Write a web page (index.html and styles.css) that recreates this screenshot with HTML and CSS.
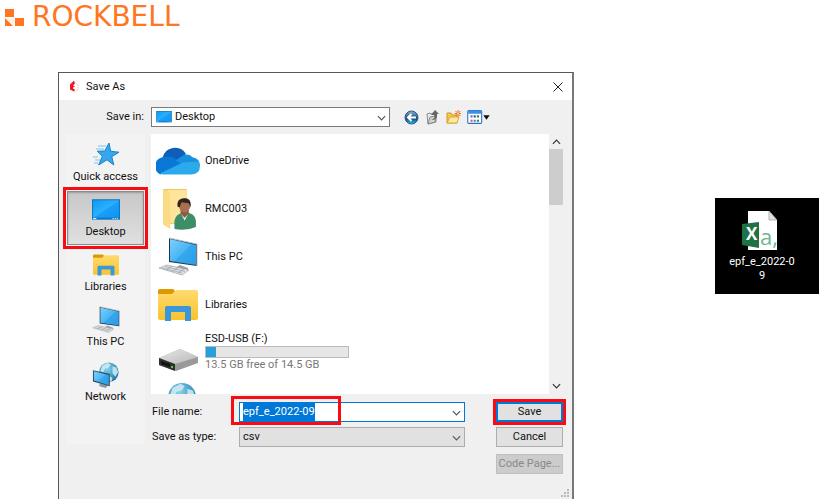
FILE: index.html
```html
<!DOCTYPE html>
<html lang="en">
<head>
<meta charset="utf-8">
<title>Save As</title>
<link rel="stylesheet" href="styles.css">
</head>
<body>
<svg class="defs" aria-hidden="true">
  <defs>
    <linearGradient id="blue" x1="0" y1="0" x2="1" y2="1"><stop offset="0" stop-color="#129af0"/><stop offset=".5" stop-color="#2cb0ff"/><stop offset=".52" stop-color="#18a0fa"/><stop offset="1" stop-color="#1493ee"/></linearGradient>
    <linearGradient id="screen" x1="0" y1="0" x2="1" y2="1"><stop offset="0" stop-color="#7dd0fb"/><stop offset=".5" stop-color="#49b6f5"/><stop offset=".52" stop-color="#35a8ee"/><stop offset="1" stop-color="#2d9de6"/></linearGradient>
    <linearGradient id="gold" x1="0" y1="0" x2="0" y2="1"><stop offset="0" stop-color="#ffdb6e"/><stop offset="1" stop-color="#f8c32c"/></linearGradient>
    <linearGradient id="metal" x1="0" y1="0" x2="1" y2="1"><stop offset="0" stop-color="#e6e6e6"/><stop offset="1" stop-color="#b9b9b9"/></linearGradient>
    <radialGradient id="sea" cx=".4" cy=".3" r=".8"><stop offset="0" stop-color="#8fd3ec"/><stop offset=".6" stop-color="#3b98c4"/><stop offset="1" stop-color="#19608f"/></radialGradient>
    <linearGradient id="orb" x1="0" y1="0" x2="0" y2="1"><stop offset="0" stop-color="#9aaec2"/><stop offset=".4" stop-color="#2a6aa5"/><stop offset=".6" stop-color="#0f4a86"/><stop offset="1" stop-color="#35c0ea"/></linearGradient>
  </defs>
  <symbol id="desktop" viewBox="0 0 26 20"><rect width="26" height="19" fill="#0a78c8"/><rect x="1" y="1" width="24" height="16" fill="url(#blue)"/><path d="M1 18h3M19 18h1M21 18h1M23 18h1" stroke="#d8f0ff"/></symbol>
  <symbol id="star" viewBox="0 0 28 26"><path d="M17 1l1.700 8.300 8.300.9-7.200 4.400 2 8.400-6.800-5.200-8.300 5.200 3.600-8.800-5-5 7.500-.2z" fill="#35a7ee" stroke="#1681cc"/><path d="M6 4h8M4 7h8M1 15h5M3 18h5M2 21h4" stroke="#7cc4ef" stroke-width="1.200"/></symbol>
  <symbol id="library" viewBox="0 0 40 34"><path d="M0 3q0-2 2-2h13l4 4-4 4H0z" fill="#dc9a00"/><path d="M0 6h14l4-4h20q2 0 2 2v26q0 2-2 2H2q-2 0-2-2z" fill="url(#gold)"/><path d="M7 33V20q0-2 2-2h22q2 0 2 2v13h-6v-9H13v9z" fill="#3a96dd"/></symbol>
  <symbol id="pc" viewBox="0 0 40 40"><path d="M22 28l8 3v2l-8 1-5-3z" fill="#9aa1a7"/><path d="M11 1l28 6v22l-28-4z" fill="#243744"/><path d="M12 2l26 6v20l-26-4z" fill="url(#screen)"/><path d="M11 1l28 6M39 7v22" stroke="#b8c5cc" fill="none"/><path d="M1 31l8-3 22 5-7 5z" fill="#e2e5e7" stroke="#9da3a8" stroke-width=".7"/><path d="M4 31l20 5M7 29.500l20 5M8 33l6-4M14 34.500l6-4M20 36l6-4" stroke="#9da3a8" stroke-width=".8"/></symbol>
  <symbol id="network" viewBox="0 0 30 30"><circle cx="18" cy="12" r="10.500" fill="url(#sea)"/><path d="M11 5l6-3 3 2-2 3-4 1-2 4-3-1zM22 6l4 1 2 5-3 5-3-4zM18 16l4 2-1 4-4-1z" fill="#d5ebf2" opacity=".85"/><path d="M8 24l9 2-2 3-7-2z" fill="#8d979e"/><path d="M1 10l18 4v13L1 22z" fill="#294756"/><path d="M2 11l16 4v11L2 21z" fill="url(#screen)"/></symbol>
  <symbol id="chevron" viewBox="0 0 10 6"><path d="M1 1l4 4 4-4" fill="none" stroke="currentColor" stroke-width="1.300"/></symbol>
</svg>

<header class="brand">
  <svg class="brand-mark" viewBox="0 0 19 17" aria-hidden="true"><path d="M0 0h9v8H0zM10 9h9v8h-9zM0 9l8 8H0z" fill="#ff7622"/><path d="M1 9h8v8z" fill="#fff2e8"/></svg>
  <span class="brand-name">ROCKBELL</span>
</header>

<main class="stage">
  <section class="dialog" aria-label="Save As">
    <div class="titlebar">
      <svg class="app-icon" viewBox="0 0 10 13" aria-hidden="true"><path d="M5 0L1 4v5l4 2 1-2-2-1V7l2-1-2-1 2-2z" fill="#f01820"/><path d="M6 2l3 3v4l-4 3" fill="none" stroke="#f8a0a0" stroke-dasharray="1 1"/></svg>
      <h1>Save As</h1>
      <button class="close" aria-label="Close"><svg viewBox="0 0 10 10"><path d="M.5.5l9 9M9.500.5l-9 9" stroke="#222" fill="none"/></svg></button>
    </div>

    <div class="body">
      <label class="save-in" for="folder">Save in:</label>
      <div class="topbar">
        <div class="combo combo-folder">
          <select id="folder"><option>Desktop</option></select>
          <svg class="folder-icon" aria-hidden="true"><use href="#desktop"/></svg>
          <svg class="arrow" aria-hidden="true"><use href="#chevron"/></svg>
        </div>
        <div class="tools">
          <button aria-label="Back"><svg viewBox="0 0 15 15"><circle cx="7.500" cy="7.500" r="6.500" fill="url(#orb)" stroke="#34577c"/><path d="M7.500 4L4 7.500 7.500 11M4.500 7.500H12" fill="none" stroke="#fff" stroke-width="2"/></svg></button>
          <button aria-label="Up one level"><svg viewBox="0 0 15 15"><path d="M2 4l3-1 1 1 5-2v10l-8 2z" fill="#e9e9e9" stroke="#888"/><path d="M3 14l2-7 6-1-1 6z" fill="#d4d4d4" stroke="#888"/><path d="M6 10q5-2 3-5H6l4-5 4 4h-2q1 6-6 6z" fill="#666"/></svg></button>
          <button aria-label="New folder"><svg viewBox="0 0 15 15"><path d="M1 13V3h4l1 2h5v8z" fill="#f4c94e" stroke="#c79a26"/><path d="M1 13l3-6h9l-2 6z" fill="#ffe9a0" stroke="#d6a935"/><path d="M12 0v7M8.500 3.500h6.500M9.500 1l5 5M14.500 1l-5 5" stroke="#f3712b"/><circle cx="12" cy="3.500" r="1" fill="#ffe15a"/></svg></button>
          <button class="view" aria-label="View menu"><svg viewBox="0 0 22 14"><rect x=".5" y=".5" width="13" height="12" rx="1" fill="#fff" stroke="#2372c4"/><path d="M1 2h12" stroke="#3a90e5" stroke-width="3"/><path d="M3 5h2v2H3zM6 9h2v2H6z" fill="#5a78c8"/><path d="M9 5h2v2H9zM9 9h2v2H9z" fill="#2a8a5a"/><path d="M6 5h2v2H6z" fill="#2a54b0"/><path d="M3 9h2v2H3z" fill="#e06050"/><path d="M15 5h6l-3 4z" fill="#111"/></svg></button>
        </div>
      </div>

      <nav class="places" aria-label="Places">
        <button><svg><use href="#star"/></svg><span>Quick access</span></button>
        <button class="current"><svg class="screen"><use href="#desktop"/></svg><span>Desktop</span></button>
        <button><svg class="lib"><use href="#library"/></svg><span>Libraries</span></button>
        <button><svg><use href="#pc"/></svg><span>This PC</span></button>
        <button><svg><use href="#network"/></svg><span>Network</span></button>
      </nav>

      <div class="files">
        <ul>
          <li><svg viewBox="3 3 41 41"><path d="M9 21a12 12 0 0 1 22-4l-8 7z" fill="#0f5fb8"/><path d="M9 20q6-2 11 1l10 6-23 9A8.500 8.500 0 0 1 9 20z" fill="#0a78d6"/><path d="M21 23l8-5q5-2 8 2 7 1 7 8l-8 3z" fill="#1690df"/><path d="M7 35l21-10 14-1q2 2 2 4 0 8-8 8H9z" fill="#2aaaeb"/></svg><span>OneDrive</span></li>
          <li><svg viewBox="1 1 43 43"><path d="M8 3h23v34H8z" fill="#efc65b"/><path d="M12 4h19v32H12z" fill="#ffe59b"/><path d="M8 3l7 4v35l-7-4z" fill="#fbdb83"/><path d="M19 42V34q1-7 10-8 10 0 11 8v6q-9 4-21 2z" fill="#3d8d66"/><path d="M25 26l4 8 4-8z" fill="#e9efe9"/><path d="M25 21h8v6l-4 4-4-4z" fill="#8d5a41"/><ellipse cx="29" cy="19" rx="5.500" ry="7" fill="#a87050"/><path d="M22 20q-1-8 7-8 7 0 6 9l-2-4-7-1-2 5z" fill="#30261f"/></svg><span>RMC003</span></li>
          <li><svg class="pc"><use href="#pc"/></svg><span>This PC</span></li>
          <li><svg class="lib"><use href="#library"/></svg><span>Libraries</span></li>
          <li><svg viewBox="0 3 44 44"><path d="M3 30l21-9 18 8v6l-22 8-17-6z" fill="#9a9a9a"/><path d="M3 30l21-9 18 8-23 7z" fill="url(#metal)"/><path d="M3 30l16 6v7L3 37z" fill="#303030"/><path d="M5 33l9 3v3l-9-3z" fill="#111"/><path d="M15 38h2v2h-2z" fill="#38d84b"/></svg>
            <div class="drive"><span>ESD-USB (F:)</span><div class="meter"><div class="used"></div></div><span class="free">13.5 GB free of 14.5 GB</span></div></li>
          <li><svg class="net"><use href="#network"/></svg></li>
        </ul>
        <div class="scroll" aria-hidden="true">
          <svg class="up"><use href="#chevron"/></svg>
          <div class="track"><div class="thumb"></div></div>
          <svg><use href="#chevron"/></svg>
        </div>
      </div>

      <form class="fields">
        <label for="name">File name:</label>
        <div class="combo combo-name marked">
          <input id="name" type="text" value="epf_e_2022-09" autofocus>
          <svg class="arrow" aria-hidden="true"><use href="#chevron"/></svg>
        </div>
        <button type="button" class="btn primary">Save</button>
        <label for="type">Save as type:</label>
        <div class="combo combo-type">
          <select id="type"><option>csv</option></select>
          <svg class="arrow" aria-hidden="true"><use href="#chevron"/></svg>
        </div>
        <button type="button" class="btn">Cancel</button>
        <button type="button" class="btn code" disabled>Code Page...</button>
      </form>
    </div>
    <svg class="grip" viewBox="0 0 9 9" aria-hidden="true"><path d="M6 0h2v2H6zM3 3h2v2H3zM6 3h2v2H6zM0 6h2v2H0zM3 6h2v2H3zM6 6h2v2H6z" fill="#bbb"/></svg>
  </section>

  <figure class="shortcut">
    <svg viewBox="0 0 36 40" aria-hidden="true"><path d="M6 0h21l8 9v30H6z" fill="#fff"/><path d="M27 0v9h8z" fill="#e4e4e4" stroke="#999" stroke-width=".7"/><path d="M0 13l17-2v26L0 34z" fill="#1f7246"/><text x="4" y="29" class="xl">X</text><text x="18" y="34" class="csv">a,</text></svg>
    <figcaption>epf_e_2022-0<br>9</figcaption>
  </figure>
</main>
<script src="script.js"></script>
</body>
</html>
```
FILE: styles.css
```css
*, *::after { box-sizing: border-box; }
body { margin: 0; background: #fff; color: #111; font: 11px/16px Roboto, sans-serif; }
button, input, select { font: inherit; color: inherit; margin: 0; }
button { padding: 0; border: 0; background: none; }
svg { display: block; }
.defs { position: absolute; width: 0; height: 0; }

.brand { display: flex; align-items: center; gap: 8px; height: 34px; padding-left: 5px; margin-bottom: 38px; }
.brand-mark { width: 19px; height: 17px; }
.brand-name { color: #ff7622; font: 28px/34px "DejaVu Sans", sans-serif; }

.stage { display: flex; justify-content: space-between; align-items: flex-start; gap: 16px; padding: 0 13px 0 58px; }
.dialog { position: relative; flex: 0 1 516px; min-width: 0; background: #f0f0f0; border: 1px solid #55575c; border-bottom: 0; border-right: 2px solid #77777c; }
.titlebar { display: flex; align-items: center; height: 27px; padding: 0 9px 0 10px; background: #fff; }
.app-icon { width: 10px; height: 14px; }
.titlebar h1 { flex: 1; margin: 0 0 0 7px; font-size: 11px; font-weight: 400; }
.close svg { width: 10px; height: 10px; }

.body { display: grid; grid-template-columns: 79px minmax(0, 1fr); column-gap: 6px; row-gap: 7px; padding: 7px 9px 25px 7px; }
.save-in { text-align: right; line-height: 20px; padding-right: 1px; }
.topbar { display: flex; align-items: center; gap: 14px; }
.combo { position: relative; height: 20px; border: 1px solid #7a7a7a; background: #fff; }
.combo select, .combo input { appearance: none; display: block; width: 100%; height: 18px; padding: 0 18px 0 3px; border: 0; outline: 0; background: none; line-height: 18px; }
.combo-folder { flex: 0 1 239px; }
.combo-folder select { padding-left: 23px; }
.folder-icon { position: absolute; left: 4px; top: 3px; width: 16px; height: 12px; }
.arrow { position: absolute; right: 3px; top: 7px; width: 9px; height: 6px; color: #555; pointer-events: none; }
.tools { display: flex; align-items: center; gap: 6px; }
.tools svg { width: 15px; height: 15px; }
.tools .view svg { width: 24px; height: 15px; }

.places { grid-row: 2 / span 2; align-self: start; display: flex; flex-direction: column; gap: 1px; min-height: 310px; padding: 2px 1px 0; background: #f3f3f3; }
.places button { display: flex; flex-direction: column; align-items: center; height: 54px; padding-top: 5px; }
.places svg { width: 28px; height: 28px; }
.places .lib { width: 26px; height: 28px; }
.places span { line-height: 16px; }
.places .current { border: 1px solid #8c8c8c; background: linear-gradient(#c8c8c8, #e0e0e0); box-shadow: inset 0 1px 2px #999; outline: 3px solid #f80b12; outline-offset: 1px; padding-top: 4px; }

.files { display: flex; height: 260px; overflow: hidden; background: #fff; }
.files ul { flex: 1; margin: 0; padding: 3px 0 0 5px; list-style: none; }
.files li { display: flex; align-items: center; gap: 5px; height: 48px; }
.files li > svg { width: 44px; height: 44px; }
.files .lib { padding: 4px 2px; }
.files .pc { padding: 2px; }
.files .net { padding: 2px; }
.drive { width: 144px; line-height: 14px; padding-bottom: 2px; }
.meter { height: 12px; border: 1px solid #bcbcbc; background: #e6e6e6; }
.used { width: 7%; height: 100%; background: #26a0da; }
.free { color: #777; }
.scroll { display: flex; flex-direction: column; align-items: center; width: 14px; padding: 5px 0; background: #f0f0f0; color: #333; }
.scroll svg { width: 9px; height: 6px; }
.scroll .up { transform: rotate(180deg); }
.track { flex: 1; width: 100%; padding-top: 4px; }
.thumb { height: 56px; background: #cdcdcd; }

.fields { display: grid; grid-template-columns: 88px minmax(0, 1fr) 98px; row-gap: 5px; margin-top: 1px; }
.fields label { padding-left: 1px; line-height: 20px; }
.combo-name { border-color: #0078d7; }
.marked::after { content: ""; position: absolute; left: -9px; top: -7px; width: 110px; height: 29px; border: 3px solid #f80b12; pointer-events: none; }
.combo-type { background: #e1e1e1; border-color: #adadad; }
.combo input::selection { background: #0078d7; color: #fff; }
.btn { height: 20px; margin-left: 31px; border: 1px solid #adadad; background: #e1e1e1; text-align: center; }
.primary { border: 2px solid #0078d7; outline: 3px solid #f80b12; outline-offset: 0; }
.btn.code { grid-column: 3; margin-top: 2px; background: #ccc; border-color: #bfbfbf; color: #888; white-space: nowrap; }
.grip { position: absolute; right: 2px; bottom: 1px; width: 9px; height: 9px; }

.shortcut { flex: 0 0 104px; margin: 126px 0 0; padding: 13px 0 11px; background: #000; color: #fff; text-align: center; line-height: 14px; }
.shortcut svg { width: 36px; height: 40px; margin: 0 0 4px 27px; }
.shortcut figcaption { padding-right: 10px; }
.xl { font: 700 17px "Open Sans", sans-serif; fill: #fff; }
.csv { font: 22px "Open Sans", sans-serif; fill: #6cb98d; }
```
FILE: script.js
```js
const nameField = document.getElementById("name");
nameField.focus();
nameField.select();
```
